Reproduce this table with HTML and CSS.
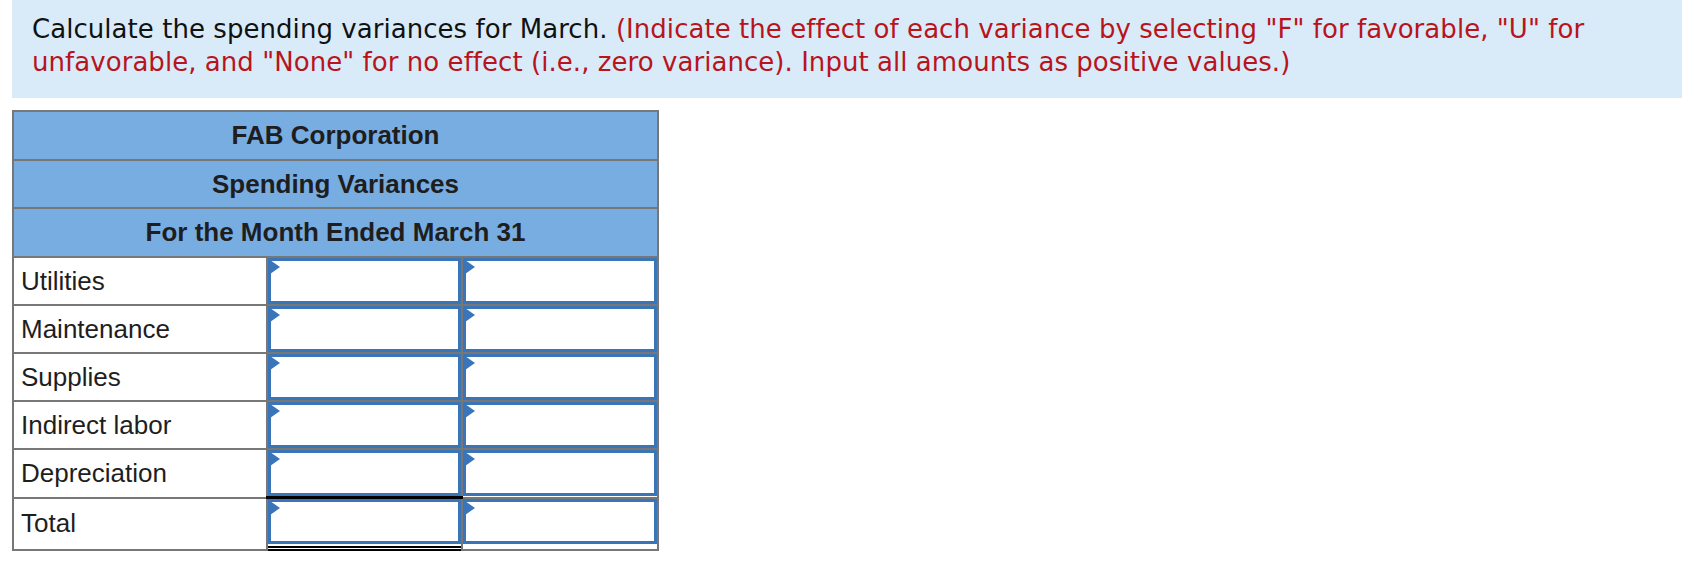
FILE: index.html
```html
<!DOCTYPE html>
<html>
<head>
<meta charset="utf-8">
<link rel="stylesheet" href="styles.css">
</head>
<body>
<div class="prompt">
  <p>Calculate the spending variances for March. <span class="note">(Indicate the effect of each variance by selecting "F" for favorable, "U" for unfavorable, and "None" for no effect (i.e., zero variance). Input all amounts as positive values.)</span></p>
</div>
<table class="sheet">
  <colgroup>
    <col class="c-label">
    <col class="c-amt">
    <col class="c-eff">
  </colgroup>
  <thead>
    <tr><th colspan="3">FAB Corporation</th></tr>
    <tr><th colspan="3">Spending Variances</th></tr>
    <tr><th colspan="3">For the Month Ended March 31</th></tr>
  </thead>
  <tbody>
    <tr><td class="label">Utilities</td><td class="cell"><div class="box"></div></td><td class="cell"><div class="box"></div></td></tr>
    <tr><td class="label">Maintenance</td><td class="cell"><div class="box"></div></td><td class="cell"><div class="box"></div></td></tr>
    <tr><td class="label">Supplies</td><td class="cell"><div class="box"></div></td><td class="cell"><div class="box"></div></td></tr>
    <tr><td class="label">Indirect labor</td><td class="cell"><div class="box"></div></td><td class="cell"><div class="box"></div></td></tr>
    <tr><td class="label">Depreciation</td><td class="cell"><div class="box"></div></td><td class="cell"><div class="box"></div></td></tr>
    <tr class="total"><td class="label">Total</td><td class="cell sum"><div class="box"></div></td><td class="cell"><div class="box"></div></td></tr>
  </tbody>
</table>
</body>
</html>
```
FILE: styles.css
```css
html, body {
  margin: 0;
  padding: 0;
  background: #ffffff;
}
.prompt {
  margin-left: 12px;
  height: 98px;
  box-sizing: border-box;
  padding: 13px 60px 0 20px;
  background: #d9ebf9;
}
.prompt p {
  margin: 0;
  font-family: "DejaVu Sans", Verdana, sans-serif;
  font-size: 26px;
  line-height: 33px;
  letter-spacing: 0.05px;
  color: #111111;
}
.note {
  color: #b8141c;
}
.sheet {
  margin: 12px 0 0 12px;
  border-collapse: collapse;
  width: 647px;
  font-family: "Liberation Sans", Arial, sans-serif;
  color: #1e1e1e;
}
.c-label { width: 254px; }
.c-amt { width: 196px; }
.c-eff { width: 197px; }
.sheet th {
  background: #78ade2;
  border: 2px solid #777777;
  height: 46.7px;
  padding: 0;
  font-size: 26px;
  font-weight: bold;
  text-align: center;
  vertical-align: middle;
}
.sheet td {
  border: 2px solid #777777;
  padding: 0;
  height: 46px;
}
.label {
  padding-left: 7px !important;
  font-size: 26px;
  text-align: left;
  vertical-align: middle;
}
.cell {
  vertical-align: top;
}
.box {
  position: relative;
  height: 46px;
  box-sizing: border-box;
  border: 3px solid #3a74b9;
  background: #ffffff;
}
.box::before {
  content: "";
  position: absolute;
  left: -1px;
  top: -1px;
  border-left: 10px solid #3a74b9;
  border-top: 7px solid transparent;
  border-bottom: 7px solid transparent;
}
.total td {
  height: 49px;
}
.total .box {
  height: 45px;
}
.sum {
  border-top: 3px solid #000000 !important;
}
.sum .box {
  margin-bottom: 5px;
  border-bottom-width: 3px;
  box-shadow: 0 2px 0 #ffffff, 0 4px 0 #000000, 0 5px 0 #ffffff, 0 7px 0 #000000;
}
```
